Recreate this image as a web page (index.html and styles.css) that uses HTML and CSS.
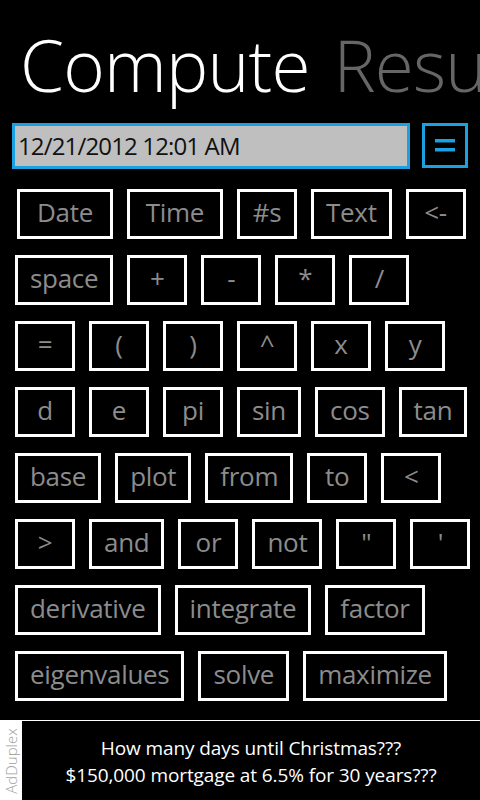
FILE: index.html
```html
<!DOCTYPE html>
<html>
<head>
<meta charset="utf-8">
<link rel="stylesheet" href="styles.css">
</head>
<body>
<div class="screen">
  <header class="title-bar">
    <span class="title-active">Compute</span>
    <span class="title-next">Results</span>
  </header>

  <div class="entry">
    <div class="entry-field">12/21/2012 12:01 AM</div>
    <div class="entry-go">
      <svg width="20" height="13" viewBox="0 0 20 13"><rect x="0" y="0" width="20" height="3.5" fill="#1ba1e2"/><rect x="0" y="9" width="20" height="3.5" fill="#1ba1e2"/></svg>
    </div>
  </div>

  <div class="keys">
    <div class="key-row key-row-first">
      <div class="key key-wide">Date</div><div class="key key-wide">Time</div><div class="key">#s</div><div class="key">Text</div><div class="key">&lt;-</div>
    </div>
    <div class="key-row">
      <div class="key">space</div><div class="key">+</div><div class="key">-</div><div class="key">*</div><div class="key">/</div>
    </div>
    <div class="key-row">
      <div class="key">=</div><div class="key">(</div><div class="key">)</div><div class="key">^</div><div class="key">x</div><div class="key">y</div>
    </div>
    <div class="key-row">
      <div class="key">d</div><div class="key">e</div><div class="key">pi</div><div class="key">sin</div><div class="key">cos</div><div class="key">tan</div>
    </div>
    <div class="key-row">
      <div class="key">base</div><div class="key">plot</div><div class="key">from</div><div class="key">to</div><div class="key">&lt;</div>
    </div>
    <div class="key-row">
      <div class="key">&gt;</div><div class="key">and</div><div class="key">or</div><div class="key">not</div><div class="key">"</div><div class="key">'</div>
    </div>
    <div class="key-row">
      <div class="key">derivative</div><div class="key">integrate</div><div class="key">factor</div>
    </div>
    <div class="key-row">
      <div class="key">eigenvalues</div><div class="key">solve</div><div class="key">maximize</div>
    </div>
  </div>

  <footer class="ad">
    <div class="ad-brand"><span class="ad-brand-text">AdDuplex</span></div>
    <div class="ad-body">
      <div>How many days until Christmas???</div>
      <div>$150,000 mortgage at 6.5% for 30 years???</div>
    </div>
  </footer>
</div>
</body>
</html>
```

FILE: styles.css
```css
html, body {
  margin: 0;
  padding: 0;
  background: #000;
}

.screen {
  width: 480px;
  height: 800px;
  overflow: hidden;
  background: #000;
  font-family: "Open Sans", "Noto Sans", sans-serif;
  display: flex;
  flex-direction: column;
}

.title-bar {
  white-space: nowrap;
  overflow: hidden;
  height: 120px;
  padding-left: 20px;
  font-size: 71px;
  font-weight: 300;
  line-height: 140px;
  letter-spacing: -0.8px;
  box-sizing: border-box;
  margin-top: -5px;
}

.title-active {
  color: #fff;
}

.title-next {
  color: #666;
  margin-left: 6px;
}

.entry {
  display: flex;
  align-items: flex-start;
  padding-left: 12px;
  margin-top: 8px;
}

.entry-field {
  box-sizing: border-box;
  width: 398px;
  height: 46px;
  border: 3px solid #1ba1e2;
  background: #bfbfbf;
  color: #111;
  font-size: 24px;
  line-height: 40px;
  padding-left: 3px;
  letter-spacing: -0.85px;
}

.entry-go {
  box-sizing: border-box;
  width: 46px;
  height: 45px;
  margin-left: 12px;
  border: 3px solid #1ba1e2;
  display: flex;
  align-items: center;
  justify-content: center;
}

.keys {
  display: flex;
  flex-direction: column;
  gap: 16px;
  padding-left: 15px;
  margin-top: 20px;
}

.key-row {
  display: flex;
  gap: 14px;
}

.key-row-first {
  padding-left: 2px;
}

.key {
  box-sizing: border-box;
  height: 50px;
  min-width: 60px;
  padding: 0 12px 4px;
  border: 3px solid #fff;
  color: #8c8c8c;
  font-size: 26px;
  letter-spacing: -0.3px;
  display: flex;
  align-items: center;
  justify-content: center;
  white-space: nowrap;
}

.key-wide {
  min-width: 96px;
}

.ad {
  margin-top: auto;
  height: 80px;
  display: flex;
  border-top: 1px solid #fff;
  box-sizing: border-box;
  background: #fff;
}

.ad-brand {
  width: 22px;
  background: #fff;
  display: flex;
  align-items: center;
  justify-content: center;
}

.ad-brand-text {
  display: block;
  transform: rotate(-90deg);
  color: #a0a0a0;
  font-size: 15px;
  font-weight: 300;
  white-space: nowrap;
}

.ad-body {
  flex: 1;
  background: #000;
  color: #fff;
  font-size: 19px;
  line-height: 27px;
  text-align: center;
  padding-top: 14px;
  letter-spacing: -0.1px;
}
```
